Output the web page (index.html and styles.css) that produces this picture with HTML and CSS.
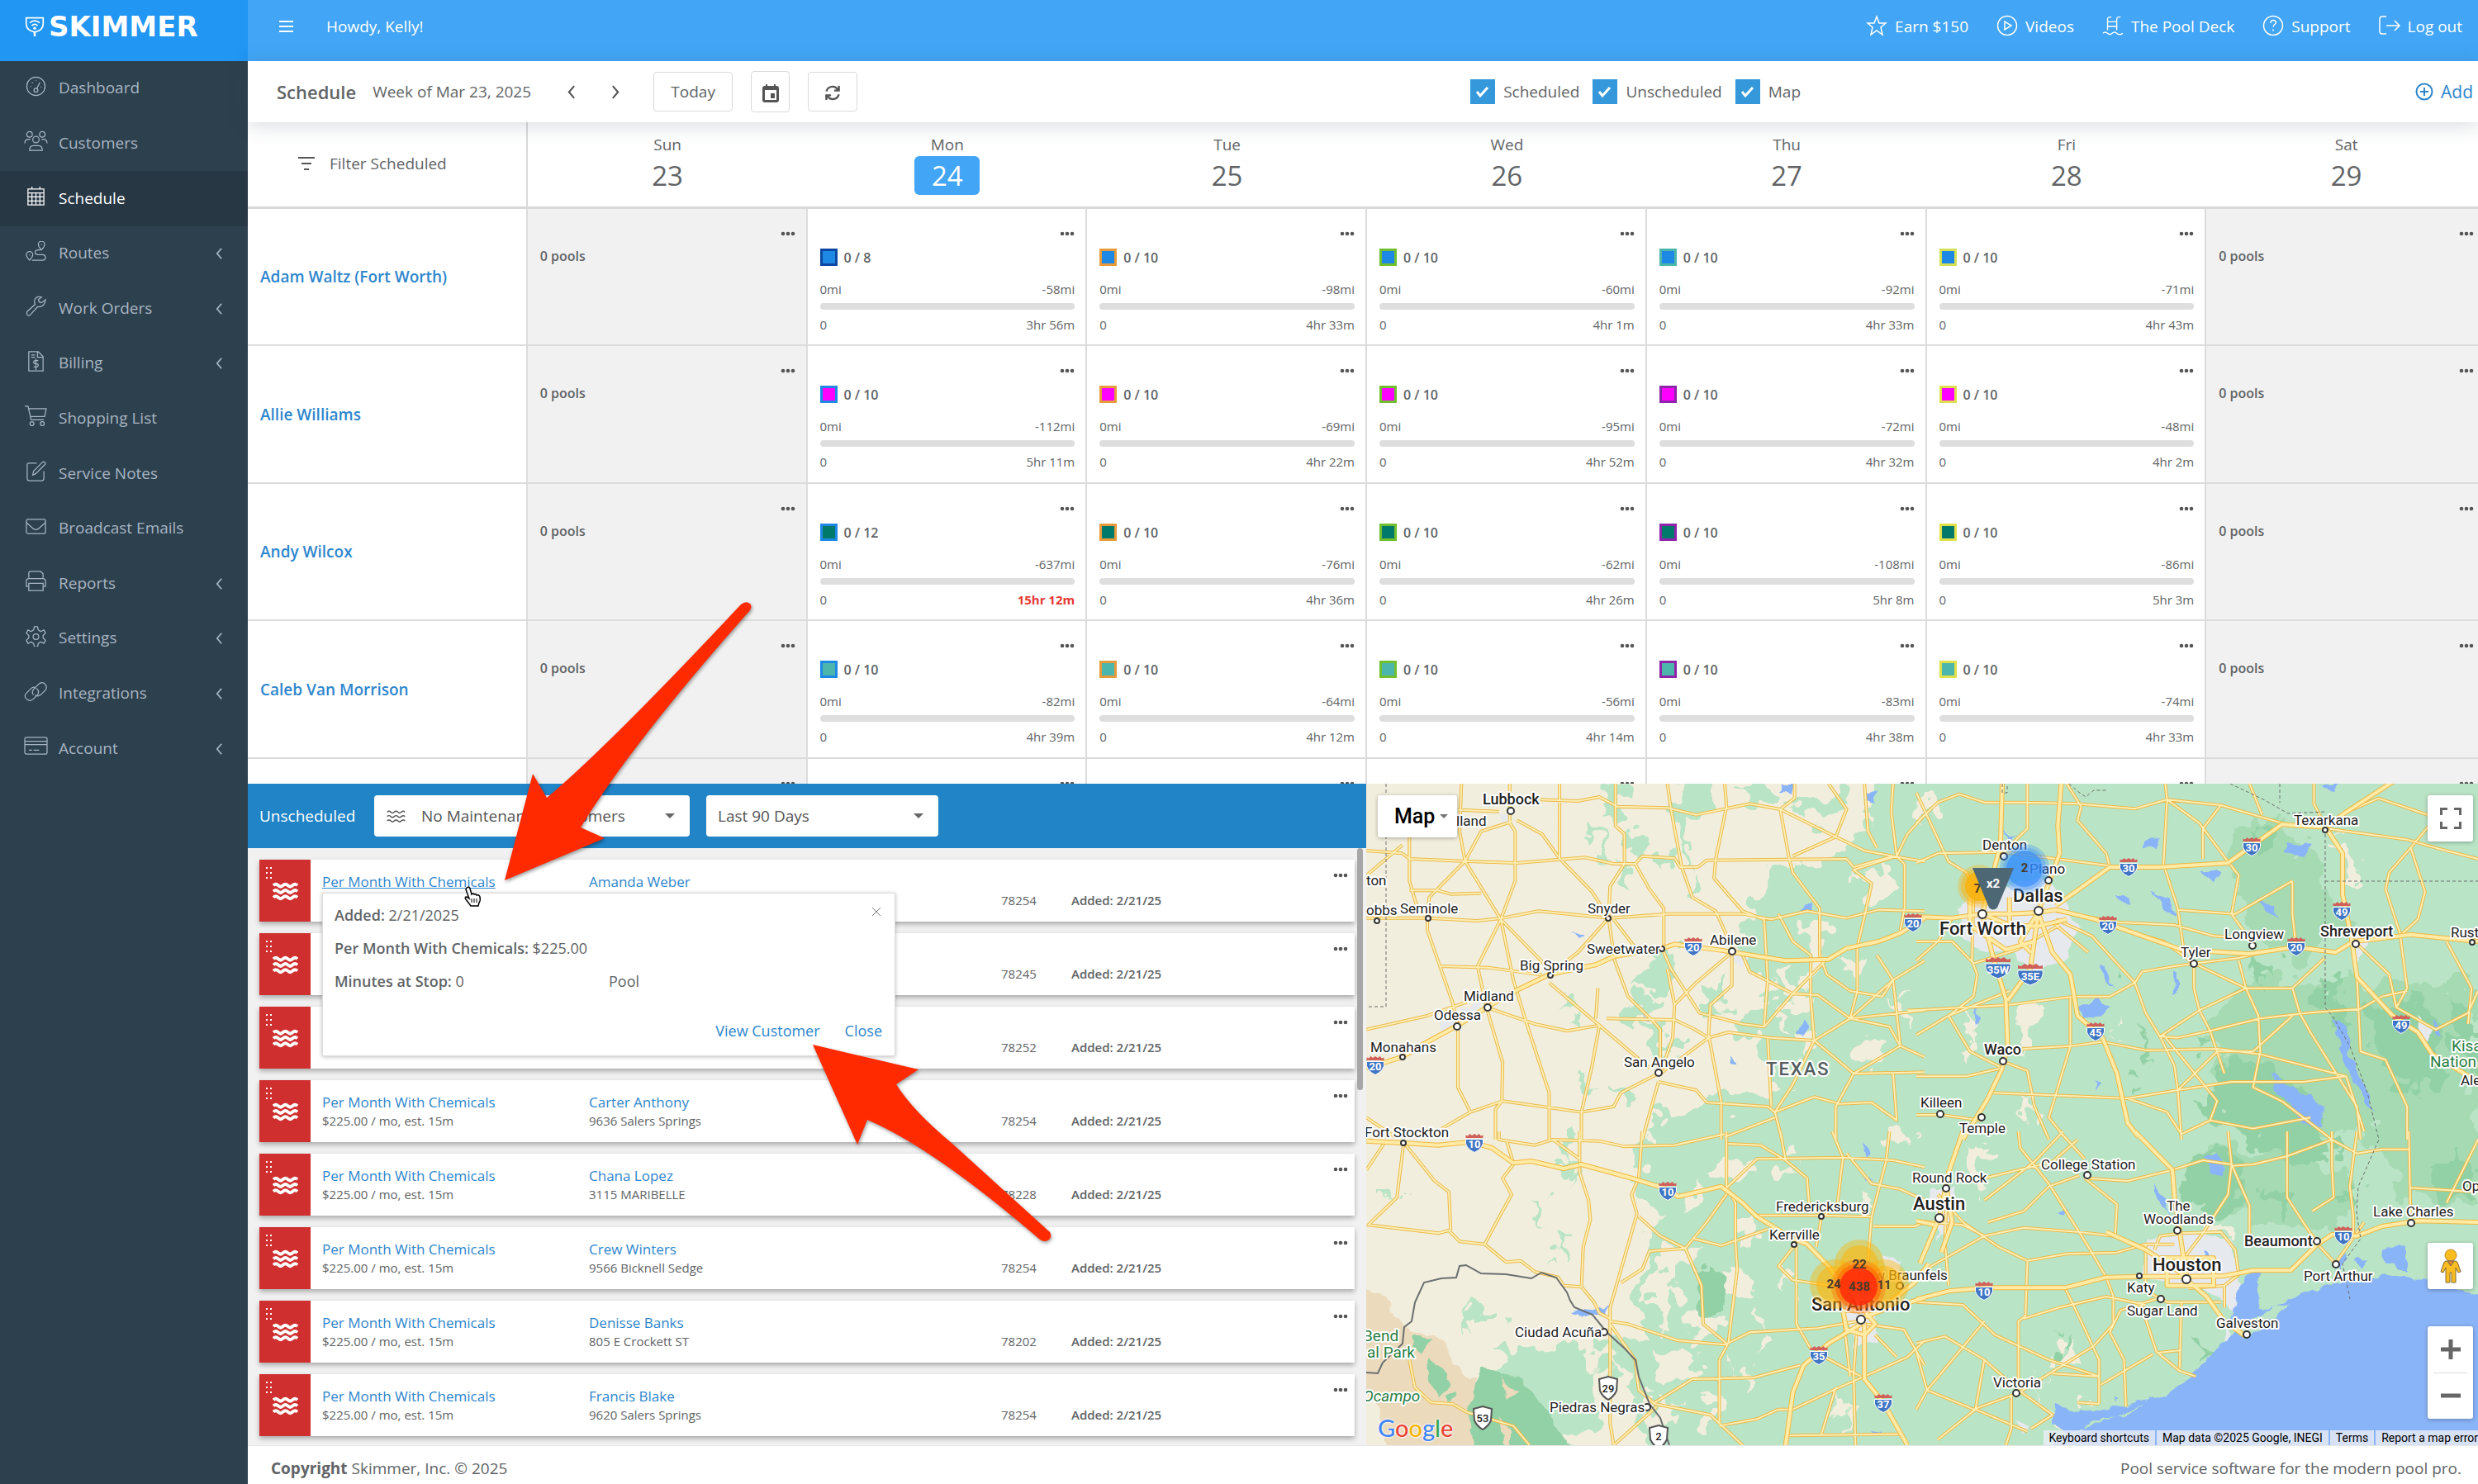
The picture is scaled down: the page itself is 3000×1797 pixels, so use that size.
FILE: index.html
```html
<!DOCTYPE html>
<html lang="en">
<head>
<meta charset="utf-8">
<title>Schedule - Skimmer</title>
<link rel="stylesheet" href="styles.css">
</head>
<body>
<svg class="sprite" aria-hidden="true">
  <symbol id="i-dots" viewBox="0 0 18 6"><circle cx="3" cy="3" r="2.3"/><circle cx="9" cy="3" r="2.3"/><circle cx="15" cy="3" r="2.3"/></symbol>
  <symbol id="i-waves" viewBox="0 0 32 22"><path d="M1 4.500q3-3 6 0t6 0q3-3 6 0t6 0q3-3 6 0M1 12q3-3 6 0t6 0q3-3 6 0t6 0q3-3 6 0M1 19.500q3-3 6 0t6 0q3-3 6 0t6 0q3-3 6 0" fill="none" stroke="currentColor"/></symbol>
  <symbol id="i-grip" viewBox="0 0 8 16"><path d="M0 0h2v2H0zM5 0h2v2H5zM0 6h2v2H0zM5 6h2v2H5zM0 12h2v2H0zM5 12h2v2H5z"/></symbol>
  <symbol id="i-left" viewBox="0 0 10 18"><path d="M8 2 2 9l6 7"/></symbol>
</svg>

<aside class="sidebar">
  <a class="brand" href="#">
    <svg class="brand-mark" viewBox="0 0 28 28"><g fill="none" stroke="#fff" stroke-width="2"><path d="M2 2h24v8q0 10-12 12Q2 20 2 10z"/><path d="M7 9q7-6 14 0M10 13q4-4 8 0"/></g><circle cx="14" cy="16.500" r="2" fill="#fff"/><path d="M12.500 21h3v7h-3z" fill="#fff"/></svg>
    <span>SKIMMER</span>
  </a>
  <nav class="menu">
    <a href="#"><svg viewBox="0 0 26 26"><circle cx="13" cy="13" r="11.500"/><circle cx="13" cy="18" r="2.500"/><path d="m14 16 4-8M6 13h1M8 8l1 1M13 5v1M19 14h1"/></svg>Dashboard</a>
    <a href="#"><svg viewBox="0 0 30 26"><circle cx="7" cy="5" r="3.500"/><circle cx="23" cy="5" r="3.500"/><circle cx="15" cy="11.500" r="4"/><path d="M1 16q0-5 5-5h2M29 16q0-5-5-5h-2M7 25q0-6 5-6h6q5 0 5 6z"/></svg>Customers</a>
    <a href="#" class="active"><svg viewBox="0 0 26 26"><path d="M3 4h20v20H3zM3 9h20M3 14h20M3 19h20M8 9v15M13 9v15M18 9v15M8 1v3M18 1v3"/></svg>Schedule</a>
    <a href="#"><svg viewBox="0 0 26 26"><path d="M20 11q-4-4-4-7a4 4 0 0 1 8 0q0 3-4 7zM5 24q-4-4-4-7a4 4 0 0 1 8 0q0 3-4 7zM19 11h-3q-4 0-4 3t4 3h5q4 0 4 3.500T21 24H8"/><path d="M20 4v1M5 17v1"/></svg>Routes<svg class="chev"><use href="#i-left"/></svg></a>
    <a href="#"><svg viewBox="0 0 26 26"><path d="M20 2q-8-2-9 5 0 2 1 4L2 20q-1 2 0 4 2 2 4 0l9-10q9 1 10-9l-5 4-3-1-1-3z"/></svg>Work Orders<svg class="chev"><use href="#i-left"/></svg></a>
    <a href="#"><svg viewBox="0 0 26 26"><path d="M4 1h12l6 6v18H4zM15 1v7h7M7 5h5M7 8h5M16 12q-6-1-6 2 0 2 3 2t3 2q0 3-6 2M13 10v14"/></svg>Billing<svg class="chev"><use href="#i-left"/></svg></a>
    <a href="#"><svg viewBox="0 0 30 26"><path d="M1 1h4l4 17h16M5 4h23l-2 10H8"/><circle cx="10" cy="23" r="2.500"/><circle cx="23" cy="23" r="2.500"/></svg>Shopping List</a>
    <a href="#"><svg viewBox="0 0 26 26"><path d="M14 3H4Q2 3 2 5v17q0 3 3 3h15q3 0 3-3V13M9 18l1-5L21 2q2-2 4 1 0 1-1 2L13 16z"/></svg>Service Notes</a>
    <a href="#"><svg viewBox="0 0 26 26"><rect x="1" y="4" width="24" height="18" rx="2"/><path d="m1 8 9 8q3 2 6 0l9-8"/></svg>Broadcast Emails</a>
    <a href="#"><svg viewBox="0 0 26 26"><path d="M4 9V3q0-2 2-2h13l3 3v5M4 20H1v-7q0-3 3-3h18q3 0 3 3v7h-3M4 16h18v9H4z"/></svg>Reports<svg class="chev"><use href="#i-left"/></svg></a>
    <a href="#"><svg viewBox="0 0 26 26"><path d="M11 1h4l1 4 3 2 4-2 2 4-3 3v3l3 3-2 4-4-2-3 2-1 4h-4l-1-4-3-2-4 2-2-4 3-3v-3L1 9l2-4 4 2 3-2z"/><circle cx="13" cy="13.500" r="3.500"/></svg>Settings<svg class="chev"><use href="#i-left"/></svg></a>
    <a href="#"><svg viewBox="0 0 32 26"><path d="M13 17q-3-3 0-7l6-6q4-4 8-1 4 4 1 8l-6 6q-4 3-7 0M17 9q4 4 1 8l-5 5q-4 4-8 1-5-4-1-8l6-6q3-3 6 0"/></svg>Integrations<svg class="chev"><use href="#i-left"/></svg></a>
    <a href="#"><svg viewBox="0 0 30 26"><rect x="1" y="2" width="28" height="21" rx="2"/><path d="M1 7h28M1 11h28M6 18h4M12 18h7"/></svg>Account<svg class="chev"><use href="#i-left"/></svg></a>
  </nav>
</aside>

<main class="page">
  <header class="topbar">
    <button class="burger" aria-label="Toggle menu"></button>
    <span class="greeting">Howdy, Kelly!</span>
    <nav class="toplinks">
      <a href="#"><svg viewBox="0 0 26 26"><path d="m13 2 3 8h8l-6 5 2 9-7-5-7 5 2-9-6-5h8z"/></svg>Earn $150</a>
      <a href="#"><svg viewBox="0 0 26 26"><circle cx="13" cy="13" r="11.500"/><path d="M10 8v10l8-5z"/></svg>Videos</a>
      <a href="#"><svg viewBox="0 0 28 26"><path d="M7 19V5q0-4 5-3M19 19V5q0-4 5-3M7 8h12M7 14h12M1 23q3-3 6 0t6 0q3-3 6 0t8 0"/></svg>The Pool Deck</a>
      <a href="#"><svg viewBox="0 0 26 26"><circle cx="13" cy="13" r="11.500"/><path d="M10 10q0-4 3.500-3.500 4 1 2.500 4-3 2-3 4M13 17.500v2"/></svg>Support</a>
      <a href="#"><svg viewBox="0 0 26 26"><path d="M9 2H4Q1 2 1 5v15q0 3 3 3h5M9 13h16M19 7l6 6-6 6"/></svg>Log out</a>
    </nav>
  </header>

  <section class="toolbar">
    <h1>Schedule</h1>
    <span class="week">Week of Mar 23, 2025</span>
    <button class="arrow" aria-label="Previous week"><svg><use href="#i-left"/></svg></button>
    <button class="arrow next" aria-label="Next week"><svg viewBox="0 0 10 18"><path d="m2 2 6 7-6 7"/></svg></button>
    <button class="box today">Today</button>
    <button class="box pick" aria-label="Pick a date"><svg viewBox="0 0 20 22"><path d="M3 2h1V0h2v2h8V0h2v2h1q3 0 3 3v14q0 3-3 3H3q-3 0-3-3V5q0-3 3-3zm0 5v12h14V7zm7 4h5v6h-5z" fill="#555" fill-rule="evenodd"/></svg></button>
    <button class="box refresh" aria-label="Refresh"><svg viewBox="0 0 20 20"><path d="M2 8q2-6 8-6 4 0 7 4M18 1v6h-6M18 12q-2 6-8 6-4 0-7-4M2 19v-6h6" fill="none" stroke="#555" stroke-width="2.500"/></svg></button>
    <div class="toggles">
      <label><input type="checkbox" checked>Scheduled</label>
      <label><input type="checkbox" checked>Unscheduled</label>
      <label><input type="checkbox" checked>Map</label>
    </div>
    <a class="add" href="#"><svg viewBox="0 0 22 22"><circle cx="11" cy="11" r="9.500"/><path d="M11 6v10M6 11h10"/></svg>Add</a>
  </section>

  <section class="schedule">
    <table>
      <thead><tr>
        <th class="filter"><button><svg viewBox="0 0 20 17"><path d="M0 0h20v2H0zM4 7h12v2H4zM7 14h6v2H7z"/></svg>Filter Scheduled</button></th>
        <th>Sun<b>23</b></th><th>Mon<b class="today-mark">24</b></th><th>Tue<b>25</b></th><th>Wed<b>26</b></th><th>Thu<b>27</b></th><th>Fri<b>28</b></th><th>Sat<b>29</b></th>
      </tr></thead>
      <tbody id="techs"></tbody>
    </table>
  </section>

  <section class="lower">
    <div class="unscheduled">
      <div class="filters">
        <span>Unscheduled</span>
        <div class="select wide"><svg class="wave"><use href="#i-waves"/></svg><select aria-label="Customer filter"><option>No Maintenance Customers</option></select></div>
        <div class="select"><select aria-label="Period"><option>Last 90 Days</option></select></div>
      </div>
      <div class="jobs" id="jobs"></div>
      <div class="thumb"></div>
      <div class="popup" role="dialog" aria-label="Service details">
        <button class="x" aria-label="Dismiss"><svg viewBox="0 0 12 12"><path d="m1 1 10 10M11 1 1 11"/></svg></button>
        <p><b>Added:</b> 2/21/2025</p>
        <p><b>Per Month With Chemicals:</b> $225.00</p>
        <p class="split"><span><b>Minutes at Stop:</b> 0</span><span>Pool</span></p>
        <div class="actions"><a href="#">View Customer</a><a href="#">Close</a></div>
      </div>
    </div>

    <div class="map">
      <svg class="tiles" viewBox="1654 949 1346 801" preserveAspectRatio="xMinYMin slice">
        <defs>
          <filter id="rough" x="-5%" y="-5%" width="110%" height="110%"><feTurbulence type="fractalNoise" baseFrequency="0.035" numOctaves="3" seed="4"/><feDisplacementMap in="SourceGraphic" scale="60" xChannelSelector="R" yChannelSelector="G"/></filter>
          <filter id="rough2" x="-5%" y="-5%" width="110%" height="110%"><feTurbulence type="fractalNoise" baseFrequency="0.06" numOctaves="2" seed="7"/><feDisplacementMap in="SourceGraphic" scale="14" xChannelSelector="R" yChannelSelector="G"/></filter>
          <g id="shield"><path d="M1.500 7.500h21q1 6-2 9.500-3.500 4.500-8.500 6.500-5-2-8.500-6.500-3-3.500-2-9.500z" fill="#3f75c4" stroke="#fff"/><path d="M1.500 6V2.500l2.500 1L6.500 1 9 3l3-2 3 2 2.500-2L20 3.500l2.500-1V6z" fill="#d0605a"/></g>
          <g id="shield-wide"><path d="M1 10h30q1 7-3 11-5 5-12 7-7-2-12-7-4-4-3-11z" fill="#3f75c4" stroke="#fff"/><path d="M1 8V4l4 1 4-3 4 2 3-2 3 2 4-2 4 3 4-1v4z" fill="#d0605a"/></g>
          <g id="mxshield"><path d="M2 5 13 2l11 3-1 14q-3 7-10 11Q6 26 3 19z" fill="#fff" stroke="#555" stroke-width="2"/></g>
          <g id="hwy">
            <g transform="translate(1650 940) scale(.4337 .3333)"><path d="M10 1060 110 1020 180 965 265 905 345 840 425 780 520 720 650 685 700 655 835 625 870 610 1000 632 1060 645 1180 670 1300 665 1350 625 1440 600 1500 570 1568 515"/></g>
            <g transform="translate(2320 940) scale(.4337 .3333)"><path d="M0 510 100 515 184 500 260 500 340 495 390 485 500 520 620 575 740 630 930 645 1060 620 1170 640 1220 600 1290 590 1380 575 1568 600M390 470 540 330 680 330 870 315 1020 175 1140 185 1200 130 1330 20M240 20 235 250 184 500 215 660 250 810 255 980 240 1060 200 1170 130 1320M405 20 395 180 400 280 340 495 325 640 318 700 255 815M340 495 380 640 430 720 450 870 520 950 560 1080 590 1260 620 1310M1145 190 1190 280V430L1215 590 1230 730 1330 870 1400 930 1440 1010 1568 1110M184 500 260 540 340 545 420 520M340 495 290 600 320 640M150 440V540L250 630 330 600M260 440V560"/></g>
            <g transform="translate(1650 1370) scale(.4337 .3333)"><path d="M10 35 110 42 210 50 300 38 360 60 420 115 470 108 560 135 610 120 750 170 850 210 880 237 1000 200 1060 260 1100 310 1200 390 1240 410 1300 490 1390 660M1390 700 1300 770 1230 850 1200 950 1180 1140M1400 700V900L1450 980 1520 1140M1390 680 1450 650 1568 605M1580 480 1540 550 1430 660M1340 650 1350 720 1400 740 1430 700 1400 650z"/></g>
            <g transform="translate(2320 1370) scale(.4337 .3333)"><path d="M0 610 90 580 200 568 415 568 530 530 640 527 755 527 860 525 940 505 1045 505 1120 410 1160 375 1230 380 1300 345 1400 325 1568 330M610 0 715 140 720 230 745 450 755 530M755 540 810 600 860 690 920 745M130 0 90 150 65 310 10 480M0 325 50 340M680 460H830V560H700V460M85 210 100 330 70 440M530 365 640 430 700 480 755 530"/></g>
          </g>
          <g id="roads">
            <g transform="translate(1650 940) scale(.4337 .3333)"><path d="M10 270 110 280 130 300 280 308 430 315 620 295 700 318 760 318 780 290 870 298 885 330H935L960 305 1350 300 1370 330 1480 290 1568 310M10 515 180 515 320 525 390 515 490 490 690 515 850 500 1060 500 1140 520 1240 490 1350 515 1440 485 1568 490M130 220V380L150 470M275 27 270 200 285 308M410 27V170L425 200V380L385 520M415 165 330 200 285 308 385 520 420 740 455 890 520 1150M430 160 500 210 550 300 640 420 686 515M549 27V300M130 415H210L245 428 330 425M705 27V180L730 210V318L690 400 686 515 600 640 520 720M760 318 800 410 840 480V620M850 27 860 120 890 330 920 440 985 490 1030 620M1010 27 1015 110 985 300 980 370 1060 490 1120 520M265 122 380 128M495 85 600 90 660 75 710 110 850 115 930 140 1080 100 1165 120 1320 220 1400 270 1480 290M1205 27V80L1165 120 1190 300 1200 350 1275 480V650L1295 720 1360 780 1450 800M1300 27 1350 120 1320 220 1200 290M1160 500 1200 600 1250 650V800L1260 960M1400 27 1410 200 1435 260M1480 27 1475 130 1490 290 1512 320V480L1500 560M1568 140 1520 210 1490 290 1370 340 1420 390 1400 510 1380 620V780L1360 880M180 515V560L250 820 265 905V1130L300 1220M285 308 185 440 180 515M385 520 320 690 345 840 390 1040 388 1180 370 1210V1320M385 520 520 700M215 690 350 695 500 722M10 920 180 870 290 820M345 840 480 900 570 925 660 905 520 750M650 880 656 770M686 515 695 600 700 660 740 800 810 890 830 920V1080M700 520 770 640M835 625 860 700 910 800 940 860 1060 900 1120 910M850 700 870 830 865 950 830 1080M1030 640 930 750 870 830M1030 640V760L970 830 965 940 1000 1180V1320M1060 650 1080 710 1200 790 1270 795 1360 880 1470 910 1500 980 1568 1020M660 905 640 1050 610 1220V1320M660 905 800 1060M680 880 870 885 920 915 965 950 1020 930 1140 950 1260 960 1370 1080 1320 1200V1320M965 950 830 1080M520 1150V1320M825 1080 720 1150 700 1200 610 1220 390 1180 300 1220 220 1280M825 1110 930 1140 960 1185 1130 1200 1150 1220 1170 1320M825 1110 780 1320M1130 950 1140 1200M1260 960 1200 1120 1150 1220 1260 1165 1330 1190 1420 1185 1490 1250 1480 1080M1370 1080 1568 1075M1480 740 1450 800M1480 740 1500 980 1370 1080M1120 520 1130 740 1120 910 1200 790M1295 665 1200 790M1010 1310 1150 1240M1435 650 1480 740 1568 670M1480 740 1360 880 1260 960M10 1240 90 1310M1520 850H1568L1360 880M110 250 10 360"/></g>
            <g transform="translate(2320 940) scale(.4337 .3333)"><path d="M0 170 60 95 120 65 190 95 310 95 450 100 610 118 700 85 850 105 1020 170M0 60 90 310 140 350 170 430M0 315 60 280 240 275 360 295 540 325M310 27V190L240 280M420 27 460 110 450 160 530 280 540 330M695 27 700 85 690 320 730 480 745 620M700 85 790 170 870 310M930 27 965 140M850 105 800 190V300M390 490 560 530 720 540 830 580 935 590M730 485 890 500 1050 380M870 310 900 360 880 500 940 610M1110 27V100L1145 190 1370 230 1450 260 1568 300M1200 130 1290 80 1450 150 1380 260 1320 350 1310 410 1350 570M1380 260 1420 420 1400 520 1350 580M775 680 690 600 610 570M775 680 720 690 630 710 610 750 540 800 440 800 260 830 0 850M775 680V770L790 850 820 925 860 1080M775 680 900 660 1000 630M775 680 920 770 1050 770 1140 660M390 520 490 580 560 680 610 750 640 860 680 945 720 1050 730 1140 740 1320M900 670 920 770 955 870 960 1000 940 1130 1020 1180 1160 1320M1050 770 1070 860 1100 930 1230 1200 1240 1320M920 770 790 850 680 945 730 950 820 925 960 880 1090 860 1240 845 1300 800M1230 730 1240 1000 1310 1030 1370 1200V1320M1050 870 940 1000 840 1000 730 1140M690 940 840 1180 820 1250 740 1300M0 940 90 870 260 780M90 870 150 1000 240 1060M240 1010 300 990 430 980 520 965 640 995 840 990 960 1010 1200 1090M215 1150 410 1160 590 1170 730 1140 880 1110 1080 1110 1200 1090 1250 1290M0 1090 140 1090 240 1060M250 1040 310 1070 330 1200 370 1320M430 800V980L370 1240 420 1320M160 430 155 670 170 720 160 800 90 870M0 600 100 600 160 680 280 630 400 540M100 515 60 600 0 670M380 530 480 640M820 1250 940 1280 1100 1240M0 1230 70 1230 180 1250M1350 570 1370 770 1340 840 1450 920 1540 860 1568 780M1480 600 1550 770 1540 900M1215 590 1320 720 1340 840M1050 380V500L1060 620M590 1170 700 1220 740 1300M1370 780 1300 800 1240 845"/></g>
            <g transform="translate(1650 1370) scale(.4337 .3333)"><path d="M60 42 10 140M113 50 95 240 15 340 210 370 240 360 270 400 340 410 400 475 440 470 480 510 545 530 560 560 610 565 645 620 660 660 690 680M120 50 200 180 240 220 245 360M420 120 390 170 415 230 385 300 340 410M380 0V30L480 50 530 30 660 35 730 55 870 50 1010 10M400 30 420 115M530 30 605 100M605 0V150L630 250 635 320 615 420 610 565M780 0 770 170 750 230 765 300 690 640V1060L700 1140M770 310 830 380 900 425 945 560 950 700 1015 770M1025 210 960 330 900 425 800 435 780 500 720 550M1015 0V200L1040 260V400L1045 500 1020 770 995 830V1060M925 390 1000 415 1130 355M1015 205 1100 100 1340 95 1480 105 1568 130M1020 45 1110 50 1180 105 1240 170 1245 260 1280 310 1265 420M1100 305H1280L1420 310M1165 0 1180 105M1310 0 1340 95 1325 260 1285 310M1350 80 1420 190 1500 210 1568 250M1425 345H1540L1568 330M1470 0 1460 110 1420 310 1410 470M1205 415 1160 490 1200 540 1330 565M1210 415V700L1250 790M690 690 740 700 880 760 1010 775 1080 730 1270 715 1380 690M815 985 920 900 1090 895 1220 850M690 700 760 830 770 940 815 990 970 1030 1060 1140M820 1000 700 1140M995 1070 1100 1045 1160 1010 1200 1010M1200 1010 1330 930 1400 890 1520 820 1568 760M1260 800 1390 890M1320 930 1280 1100M1190 1105 1500 1100M1380 700 1370 880 1375 1140M1400 700 1510 720 1568 850M1430 740 1490 820M1340 660 1360 890M130 830 145 930 190 985 250 990 290 1020 420 1070 465 1140"/></g>
            <g transform="translate(2320 1370) scale(.4337 .3333)"><path d="M470 170 560 265 555 380M455 160 370 200 300 290 200 330M190 170 380 110 450 30M0 325 130 340 190 380 300 350 450 365 550 380M85 210 80 400 90 560M285 0 290 60 370 190 490 440 530 530M310 470 305 670 285 690V940M310 470 230 420 130 330M310 470 420 445 560 440 640 410H720M190 380 0 520M415 568 460 690 510 830V990M530 530 550 600V700L495 780 285 950M690 600 570 650 540 730 580 830 585 1000M625 620 670 800 735 870 780 890M670 805 740 795M740 620 735 860M0 620 130 630 220 740 370 830 510 890M0 770 80 745 190 830 285 940 380 1030 320 1080M190 830 165 1010 60 1120M285 950 160 1010 30 940 0 1010M30 940 0 800M30 940 190 690M300 680 400 640 530 600 640 630M380 880 510 890M450 985 510 990M515 920 660 810M265 960V1080L250 1140M165 1010 310 1090M470 170 590 180 715 140 800 105 880 120 930 270V380M870 0 880 120 870 230 800 370 750 455M880 125 940 120 1035 90 1160 30 1230 80 1300 65H1375M1035 0V240L1100 370 1120 400M1230 0 1210 200 1220 310V380M1375 0 1380 330M1160 0V120L1165 240 1105 290M1568 30 1480 260M1380 205 1560 220M1120 410 1170 480 1250 330M640 410V580L700 620H850M665 430 680 380 740 370 850 365 890 430 900 520 860 560 760 570M860 560V640M410 0 330 110 190 250M130 330 60 230M400 0 470 100"/></g>
          </g>
        </defs>
        <rect x="1654" y="949" width="1346" height="801" fill="#f2eedd"/>
        <g filter="url(#rough)">
          <path fill="#bae4c6" d="M3060 900H2280L2255 1000 2235 1035 2150 1045 2118 1090 2108 1150 2145 1200 2100 1240 2140 1290 2165 1330 2080 1330 2010 1360 1990 1400 1975 1440 2010 1480 1975 1560 1990 1620 1930 1620 1990 1700 1990 1800H3060z"/>
          <path fill="#bae4c6" d="M1940 950h20l5 25-20 10zM2035 950h40v25l-15 20-20-10zM2110 950h50l-10 25-25 5zM1925 995l15 15 8 40-15-20zM1975 1005l15 10-5 25-14-10zM2015 1020l15 5-5 20-15-5zM2035 1060l15 0-5 15h-12zM1950 1050l25 5 10 18-25-10zM2005 1160l20-10 5 15-30 35-25-10zM1960 1220l30-20 15 15-30 35zM1990 1240l40 20 0 20-15 15zM1905 1310l20-10 5 20zM1950 1320l30 0-10 20zM1895 1215l15 5 5 15-15-5zM2000 1340l30 30-20 30-15-30zM1890 1370l20 5-10 50-10-20zM1860 1450l10 10-5 35zM1885 1490l12 5-8 40zM1765 1590l35-5 0 15-30 5zM2060 1200l25-10 5 35-20 10zM1815 1590l20 5-15 15zM2030 975l20-10-5 90zM1800 1640l100-15 50 30-20 70-60 10zM1680 1440h8l-4 10zM2165 965l60-5 20 20-60 25z"/>
        </g>
        <g filter="url(#rough)" fill="#f2eedd">
          <path d="M2250 1060l30-10 20 20-15 20-25-5zM2180 1110l25 5 5 70-20 10zM2230 1150l40 10-30 20zM2160 1170l20 30-15 50-10-30zM2260 1250l30 10-15 30-20-5zM2290 1200l25 0-10 40zM2180 1250l25 15-30 30zM2330 960h20l-15 40zM2370 1260l20 10-5 20zM2385 1220l10 25-12 40zM2445 1220l20 5-10 40-20-10zM2455 1320l18 40-12 5zM2090 1400l30 5-20 25-20-10zM2050 1430l20 20-35 25zM2100 1470l30 0-15 40zM2030 1500l30 10-50 50-10-20zM2150 1410l30-10-20 25zM2090 1540l40 10-10 25-40-10zM2000 1540l30 20-10 40-20-20zM2060 1580l30 20-40 30-10-20zM2120 1600l25 10-15 30zM2010 1640l50 10-40 20zM2150 1530l25 10-5 30zM2000 1680l30 20-10 40-20-10zM2060 1690l25 10-10 40zM2100 1650l20 10 0 30zM2220 1690l20 15-10 25zM2250 1440l20 10-15 10zM2375 1390l25-10 5 50-15 20zM2480 1630l14 8-5 20-12-5zM2500 1620l15 20-15 12zM2460 1650l15 40 30 40-15 10zM2520 1690l10 0-5 20zM2560 1230l8 20-10 10zM2290 1360l20 20-30 10zM2830 1010l20 20 8 40-15 10zM2670 1480l20 0-5 20z"/>
        </g>
        <g filter="url(#rough)" fill="#a6dab3">
          <path d="M2700 1190h300v270l-80-10-60-90-90 30-70-60-30-70zM2640 1400l150-10 60 40-20 60-100-10-60-30zM2690 1010l50-20 60 40 40 90-50 50-60-30z"/>
        </g>
        <g filter="url(#rough)" fill="#92d1a5">
          <path d="M2690 1280l60 10 60 50 20 60-60 10-60-40-40-30zM2860 1220l60-20 40 50-20 80-50-30zM2640 1400l70 0 10 60-60 10zM2720 1010l20-10 15 30-20 10zM2800 1180l30 10 5 50-25-20zM2730 1160l20 10-10 30zM2960 1200l40 40v60l-30-30zM2050 1540l35 0 5 40-25 10zM2590 1310l8 10-10 12zM2595 1250l12 20-8 20zM2660 1250l15 10-10 15zM2560 1170l8 10-5 8zM2490 1610l10 25-8 5zM2660 1620l10 20-10 15zM2740 1440l30 10-10 30zM2940 1420l40-20 20 40-40 10zM2830 1440l15 10-10 15z"/>
        </g>
        <g fill="#ecdabd" filter="url(#rough2)"><path d="M1640 1560l38 8 8 24 20 18 40 12 15 30 25 20 5 90H1680l-10-60-30-20z"/></g>
        <g fill="#92d1a5" filter="url(#rough2)"><path d="M1793 1657l50 12 30 40 40 60h-125l-12-60zM1712 1615l20 10-8 15-14-8zM1728 1645l20 12 10 20-15 15-14-25zM1750 1690l12-5-10 18z"/><path fill="#ecdabd" d="M1818 1665l18 22-12 8zM1815 1715l14 20 0 20-10-10z"/></g>
        <g fill="#e6e9ee" filter="url(#rough2)">
          <path d="M2370 1100l40-20 60-20 30 30 15 30-10 40-40 20-30-30-30 5-30-20zM2235 1590h35l5 35-30 5zM2600 1500l60-10 40 10 10 50 20 40-10 25-20-30-25-20-50-10-30-10zM2336 1440l30 0 0 40-20 20zM1740 1238l30-5v15h-25zM1760 1225l30-10-5 12zM2095 1155h20l-5 20zM1815 985h15v10h-12zM2280 1520l20 5 0 30-15-10zM2500 1415h20l10 10zM2845 1130l20 10-10 25zM2925 1230l20 15-10 20zM2690 1595l15 30-10 10zM2440 1720l15 5-5 10z"/>
        </g>
        <g fill="#8ab4f8" filter="url(#rough2)">
          <path d="M3040 1580l-60-18-50-14-40-4-45 6-45 12-40 18-35 18-35 30-40 42-35 20-60 28-50 18-40 34h560zM2713 1555l20-20 2 50 38-5-30 22-20 20-25-20zM2490 1702l30 8 80-14-25 16-45 10-20 18-25-15z"/>
          <path d="M2750 1300l20 15 25 10 20 15-5 25-25-5-15-25-15-15zM2824 1230l16 14 4 30 14 30 14 40-14-12-18-40-8-34zM2670 1400l15-5 10 20-5 10-15-5zM2610 1430l10 20 4 20-12-15zM2518 1220l20-10 18 12-15 8-20 5zM2540 1165l8 5 10 25-8-8zM2630 1175h6v30h-5zM2605 1080l20 10 10 18-15-8zM2563 1085l15 2 3 12-12-2zM2595 1018l20-3-5 12-15-2zM2765 1020l35 5-10 12-25-5zM2665 1055l25 0-10 12zM2733 1085l20 15 8 12-18-10zM2810 950h20l-5 12zM2425 1000l8 12 10 0-12 10zM2155 950h15l-3 12-14-5zM2260 960l12-5-5 20-8-5zM2185 1095l10 0-4 12-10-3zM2182 1235l7 8-5 12-8-5zM1990 1225l5 8 0 8zM2095 1282l8 6-10 4zM1903 1125l15 8-5 3zM1900 1592l50-12-5 12-42 2zM2255 1380l10 15-6 10zM2260 1427l8 3-10 2zM2830 1525l10-10 4 8-12 15zM2884 1515l30-10v34l-24-12zM2850 1525l18-2-8 12zM2490 1467l14-2-8 7zM2668 1515l10 5-5 10zM2945 1235l10 8 0 15-8-8zM2390 1215l8 18-4 8zM2535 1305l6 8-2 8zM2560 1690l5 5-4 5zM2265 1733l15 2-8 5z"/>
        </g>
        <use href="#roads" class="road-edge"/><use href="#roads" class="road"/>
        <use href="#hwy" class="hwy-edge"/><use href="#hwy" class="hwy"/>
        <g class="borders">
          <path class="national" d="M1654 1662 1668 1663 1674 1650 1698 1627 1700 1607 1709 1600 1713 1577 1724 1553 1745 1548 1763 1547 1767 1533 1775 1532 1793 1542 1823 1543 1854 1548 1866 1541 1884 1547 1897 1565 1901 1575 1906 1583 1928 1592 1945 1613 1967 1633 1980 1647 1984 1667 1997 1700 2010 1717 2021 1750"/>
          <path d="M1678 949V1219H1654M2815 1003V1220L2825 1232 2845 1267 2866 1323 2880 1380 2855 1437 2853 1470 2858 1500 2836 1530 2845 1573M2815 1067H3000M2700 949 2740 968 2770 985 2815 983M2760 949V972M2424 949V960H2430V949M2505 949 2515 958 2525 965 2535 957H2550"/>
        </g>
        <g class="dots">
          <circle cx="1829" cy="982" r="4"/><circle cx="1729" cy="1112" r="3"/><circle cx="1667" cy="1115" r="3"/><circle cx="1947" cy="1112" r="3"/><circle cx="2012" cy="1149" r="3"/><circle cx="2097" cy="1152" r="4"/><circle cx="1877" cy="1181" r="3"/><circle cx="1801" cy="1220" r="4"/><circle cx="1764" cy="1243" r="4"/><circle cx="1698" cy="1280" r="3"/><circle cx="2008" cy="1299" r="4"/><circle cx="1699" cy="1384" r="3"/><circle cx="2426" cy="1037" r="4"/><circle cx="2480" cy="1066" r="4"/><circle cx="2468" cy="1103" r="5"/><circle cx="2400" cy="1107" r="5"/><circle cx="2727" cy="1145" r="4"/><circle cx="2656" cy="1167" r="4"/><circle cx="2815" cy="1005" r="3"/><circle cx="2852" cy="1143" r="4"/><circle cx="2993" cy="1141" r="3"/><circle cx="2425" cy="1285" r="4"/><circle cx="2349" cy="1349" r="4"/><circle cx="2399" cy="1353" r="4"/><circle cx="2205" cy="1473" r="3"/><circle cx="2172" cy="1507" r="3"/><circle cx="1942" cy="1613" r="4"/><circle cx="1994" cy="1704" r="4"/><circle cx="2253" cy="1598" r="5"/><circle cx="2300" cy="1557" r="4"/><circle cx="2356" cy="1439" r="4"/><circle cx="2348" cy="1475" r="5"/><circle cx="2527" cy="1423" r="4"/><circle cx="2636" cy="1490" r="4"/><circle cx="2647" cy="1549" r="5"/><circle cx="2590" cy="1545" r="3"/><circle cx="2616" cy="1573" r="4"/><circle cx="2720" cy="1616" r="4"/><circle cx="2805" cy="1503" r="4"/><circle cx="2828" cy="1531" r="4"/><circle cx="2919" cy="1481" r="4"/><circle cx="2441" cy="1687" r="4"/>
        </g>
        <g class="signs">
          <use href="#shield" x="2038" y="1134"/><text x="2050" y="1152">20</text>
          <use href="#shield" x="1653" y="1278"/><text x="1665" y="1296">20</text>
          <use href="#shield" x="2304" y="1105"/><text x="2316" y="1123">20</text>
          <use href="#shield" x="1773" y="1372"/><text x="1785" y="1390">10</text>
          <use href="#shield" x="2007" y="1430"/><text x="2019" y="1448">10</text>
          <use href="#shield" x="2565" y="1038"/><text x="2577" y="1056">30</text>
          <use href="#shield" x="2714" y="1013"/><text x="2726" y="1031">30</text>
          <use href="#shield" x="2823" y="1091"/><text x="2835" y="1109">49</text>
          <use href="#shield" x="2540" y="1108"/><text x="2552" y="1126">20</text>
          <use href="#shield" x="2768" y="1134"/><text x="2780" y="1152">20</text>
          <use href="#shield-wide" x="2403" y="1157"/><text x="2419" y="1179">35W</text>
          <use href="#shield-wide" x="2442" y="1165"/><text x="2458" y="1187">35E</text>
          <use href="#shield" x="2525" y="1237"/><text x="2537" y="1255">45</text>
          <use href="#shield" x="2895" y="1228"/><text x="2907" y="1246">49</text>
          <use href="#shield" x="2190" y="1629"/><text x="2202" y="1647">35</text>
          <use href="#shield" x="2268" y="1687"/><text x="2280" y="1705">37</text>
          <use href="#shield" x="2390" y="1551"/><text x="2402" y="1569">10</text>
          <use href="#shield" x="2825" y="1484"/><text x="2837" y="1502">10</text>
          <use href="#mxshield" x="1934" y="1665"/><text class="dark" x="1947" y="1686">29</text>
          <use href="#mxshield" x="1782" y="1701"/><text class="dark" x="1795" y="1722">53</text>
          <use href="#mxshield" x="1995" y="1724"/><text class="dark" x="2008" y="1744">2</text>
        </g>
        <g class="labels">
          <text x="1763" y="1000">lland</text><text x="1695" y="1106">Seminole</text><text x="1922" y="1106">Snyder</text><text x="1654" y="1072">ton</text><text x="1654" y="1108">obbs</text><text x="1921" y="1155">Sweetwater</text><text x="2070" y="1144">Abilene</text><text x="1840" y="1175">Big Spring</text><text x="1772" y="1212">Midland</text><text x="1736" y="1235">Odessa</text><text x="1659" y="1274">Monahans</text><text x="1966" y="1292">San Angelo</text><text x="1652" y="1377">Fort Stockton</text>
          <text x="2400" y="1029">Denton</text><text x="2457" y="1058">Plano</text><text x="2693" y="1137">Longview</text><text x="2640" y="1159">Tyler</text><text x="2777" y="999">Texarkana</text><text x="2967" y="1135">Rust</text><text x="2325" y="1341">Killeen</text><text x="2372" y="1372">Temple</text><text x="2979" y="1314">Ale</text>
          <text x="2150" y="1467">Fredericksburg</text><text x="2142" y="1501">Kerrville</text><text x="1834" y="1619">Ciudad Acuña</text><text x="1876" y="1710">Piedras Negras</text><text x="2248" y="1550">New Braunfels</text>
          <text x="2315" y="1432">Round Rock</text><text x="2471" y="1416">College Station</text><text x="2623" y="1466">The</text><text x="2595" y="1482">Woodlands</text><text x="2575" y="1565">Katy</text><text x="2575" y="1593">Sugar Land</text><text x="2683" y="1608">Galveston</text><text x="2789" y="1551">Port Arthur</text><text x="2873" y="1473">Lake Charles</text><text x="2981" y="1442">Op</text><text x="2413" y="1680">Victoria</text>
          <g class="mid"><text x="1795" y="974">Lubbock</text><text x="2809" y="1134">Shreveport</text><text x="2402" y="1277">Waco</text><text x="2717" y="1509">Beaumont</text></g>
          <g class="large"><text x="2437" y="1092">Dallas</text><text x="2348" y="1132">Fort Worth</text><text x="2193" y="1587">San Antonio</text><text x="2316" y="1465">Austin</text><text x="2606" y="1539">Houston</text></g>
          <g class="park"><text x="2968" y="1273">Kisa</text><text x="2942" y="1292">Nation</text><text x="1650" y="1624">Bend</text><text x="1655" y="1644">al Park</text><text class="it" x="1650" y="1697">Ocampo</text></g>
          <text class="state" x="2138" y="1302">TEXAS</text>
        </g>
        <g class="clusters">
          <g fill="#2f8bff"><circle cx="2451" cy="1052" r="30" opacity=".3"/><circle cx="2451" cy="1052" r="26" opacity=".3"/><circle cx="2451" cy="1052" r="22" opacity=".6"/></g>
          <g fill="#ffae00"><circle cx="2396" cy="1073" r="26" opacity=".3"/><circle cx="2396" cy="1073" r="22" opacity=".4"/><circle cx="2397" cy="1073" r="18" opacity=".7"/></g>
          <text x="2394" y="1081">7</text>
          <path d="M2388 1051h50l-20 48q-5 5-10 0z" fill="#4e6775"/>
          <g fill="#ffb300"><circle cx="2251" cy="1531" r="30" opacity=".4"/><circle cx="2221" cy="1555" r="30" opacity=".4"/><circle cx="2281" cy="1555" r="30" opacity=".4"/><circle cx="2251" cy="1531" r="23" opacity=".5"/><circle cx="2221" cy="1555" r="22" opacity=".5"/><circle cx="2281" cy="1555" r="22" opacity=".5"/></g>
          <circle cx="2250" cy="1558" r="33" fill="#ff5a00" opacity=".3"/><circle cx="2250" cy="1558" r="28" fill="#ff5a00" opacity=".5"/><circle cx="2250" cy="1558" r="23" fill="#ff2a0a" opacity=".85"/>
          <text x="2251" y="1536">22</text><text x="2220" y="1560">24</text><text x="2251" y="1563">438</text><text x="2281" y="1561">11</text><text x="2451" y="1056">2</text><text x="2413" y="1075" class="w">x2</text>
        </g>
      </svg>
      <button class="maptype">Map</button>
      <button class="ctl full" aria-label="Toggle fullscreen"><svg viewBox="0 0 26 26"><path d="M1.500 9V1.500H9M17 1.500h7.500V9M24.500 17v7.500H17M9 24.500H1.500V17"/></svg></button>
      <button class="ctl peg" aria-label="Street View"><svg viewBox="0 0 28 42"><path d="M8 15h12q2 0 3 4l3 9-3 1-3-6v18h-5V29h-2v12H8V23l-3 6-3-1 3-9q1-4 3-4z" fill="#fbbc1f" stroke="#7f6b38"/><circle cx="14" cy="8" r="7" fill="#fbbc1f" stroke="#b8892a"/><path d="M10 15h8l-4 6z" fill="#e8871e"/></svg></button>
      <div class="zoom"><button aria-label="Zoom in"><svg viewBox="0 0 26 26"><path d="M13 1v24M1 13h24"/></svg></button><button aria-label="Zoom out"><svg viewBox="0 0 26 26"><path d="M1 13h24"/></svg></button></div>
      <div class="google" aria-label="Google"><i>G</i><i>o</i><i>o</i><i>g</i><i>l</i><i>e</i></div>
      <div class="credits"><a href="#">Keyboard shortcuts</a><span>Map data ©2025 Google, INEGI</span><a href="#">Terms</a><a href="#">Report a map error</a></div>
    </div>
  </section>

  <footer><span><b>Copyright</b> Skimmer, Inc. © 2025</span><span>Pool service software for the modern pool pro.</span></footer>
</main>

<svg class="callout first" viewBox="605 725 310 350"><path d="M611 1066 645 937 662 966Q735 905 897 732 903 727 908 731 911 734 908 739 765 900 703 1002L732 1015z"/></svg>
<svg class="callout second" viewBox="980 1260 300 250"><path d="M984 1265 1112 1295 1085 1313Q1105 1345 1152 1384L1271 1492Q1274 1498 1270 1501 1265 1505 1259 1501 1130 1390 1050 1356L1038 1386z"/></svg>
<svg class="hand" viewBox="0 0 24 26"><path d="M5 2q3-2 4 1l2 7q2-2 3 0 2-1 3 1 3-1 4 2 1 5-1 7l-1 4h-9l-6-8q-2-3 1-3l3 2L4 4z" fill="#fff" stroke="#000" stroke-width="1.500"/><path d="M11 15v5M14 15v5M17 15v5" stroke="#000"/></svg>
<script src="script.js"></script>
</body>
</html>
```
FILE: styles.css
```css
* { box-sizing: border-box; }
body {
  margin: 0;
  display: flex;
  height: 100vh;
  overflow: hidden;
  position: relative;
  background: #fff;
  color: #616466;
  font: 19px/26px "Open Sans", "Noto Sans", sans-serif;
}
a { color: #2e86cd; text-decoration: none; }
button { font: inherit; color: inherit; border: 0; background: none; padding: 0; margin: 0; }
b, h1 { font-weight: 600; }
.sprite { position: absolute; width: 0; height: 0; }

/* sidebar */
.sidebar { flex: none; width: 300px; background: #2d404e; }
.brand {
  display: flex; align-items: center; gap: 3px; height: 74px; padding: 0 0 10px 28px;
  background: #2196f3; color: #fff; font: bold 34px/32px "DejaVu Sans", sans-serif;
}
.brand-mark { width: 28px; height: 24px; }
.menu { display: grid; grid-auto-rows: 1fr; height: 866px; }
.menu a { display: flex; align-items: center; gap: 12px; padding: 0 0 2px 28px; color: #a7b5c2; }
.menu a.active { background: #283744; color: #fff; }
.menu svg { width: 31px; height: 25px; margin-bottom: 4px; fill: none; stroke: currentColor; stroke-width: 1.300; }
.menu .chev { width: 9px; height: 16px; margin: 2px 30px 0 auto; stroke-width: 2; }

/* top bar */
.page { flex: 1; min-width: 0; display: flex; flex-direction: column; }
.topbar {
  flex: none; height: 74px; display: flex; align-items: center; padding: 0 19px 10px 38px;
  background: #42a5f5; color: #fff;
}
.burger { width: 17px; height: 14px; border: solid #fff; border-width: 2px 0; background: linear-gradient(#fff, #fff) center / 100% 2px no-repeat; }
.greeting { margin-left: 40px; }
.toplinks { margin-left: auto; display: flex; gap: 34px; }
.toplinks a { display: flex; align-items: center; gap: 9px; color: #fff; }
.toplinks svg { width: 26px; height: 26px; margin-bottom: 3px; fill: none; stroke: #fff; stroke-width: 1.500; }

/* toolbar */
.toolbar {
  flex: none; height: 74px; display: flex; align-items: center; padding: 0 6px 0 35px;
  background: #fff; box-shadow: 0 4px 24px rgba(40, 60, 70, .18); position: relative; z-index: 1;
}
.toolbar h1 { margin: 0; font-size: 22px; }
.week { margin-left: 20px; width: 234px; }
.arrow svg { display: block; width: 14px; height: 19px; fill: none; stroke: #555; stroke-width: 2; }
.arrow.next { margin-left: 39px; }
.box { border: 1px solid #dadada; border-radius: 4px; height: 48px; margin-left: 22px; }
.today { width: 96px; margin-left: 39px; }
.pick { width: 47px; height: 50px; }
.pick svg { width: 20px; height: 22px; vertical-align: middle; }
.refresh { width: 60px; }
.refresh svg { width: 20px; height: 19px; vertical-align: middle; }
.toggles { display: flex; gap: 16px; margin-left: auto; }
.toggles label { display: flex; align-items: center; gap: 10px; }
.toggles input {
  appearance: none; width: 30px; height: 30px; margin: 0;
  background: #3498db url("data:image/svg+xml,%3Csvg xmlns='http://www.w3.org/2000/svg' viewBox='0 0 30 30'%3E%3Cpath d='m8 15 4 5 9-10' fill='none' stroke='white' stroke-width='3'/%3E%3C/svg%3E") center / 30px;
}
.add { display: flex; align-items: center; gap: 9px; margin-left: 744px; font-size: 21px; }
.add svg { width: 22px; height: 22px; fill: none; stroke: currentColor; stroke-width: 2; }

/* schedule grid */
.schedule { flex: 1 1 0; min-height: 0; overflow: hidden; }
table { width: calc(100% + 10px); table-layout: fixed; border-spacing: 0; }
th { height: 105px; padding: 13px 0 0; border-bottom: 3px solid #d9d9d9; font-weight: 400; line-height: 28px; vertical-align: top; }
th b { display: block; width: 79px; height: 47px; margin: 0 auto; border-radius: 6px; font-weight: 400; font-size: 33px; line-height: 47px; }
.today-mark { background: #42a5f5; color: #fff; }
.filter { padding: 36px 0 0 61px; text-align: left; border-right: 2px solid #d9d9d9; }
.filter button { display: flex; align-items: center; gap: 18px; }
.filter svg { width: 20px; height: 17px; fill: #555; }
td, tbody th { height: 166px; padding: 24px 13px 0 15px; border-right: 2px solid #dcdcdc; border-bottom: 2px solid #dcdcdc; vertical-align: top; }
tr:nth-child(even) > * { height: 167px; }
tbody th { padding-top: 0; text-align: left; vertical-align: middle; font-weight: 600; }
td.off { background: #f1f1f1; font-size: 16px; font-weight: 600; }
.more { display: block; width: 18px; height: 12px; margin-left: auto; }
.more svg { display: block; width: 18px; height: 6px; fill: #555; }
td .more { margin-bottom: 12px; }
td.off .more { margin-bottom: 8px; }
.count { display: flex; align-items: center; gap: 8px; height: 21px; margin-bottom: 18px; font-size: 16px; font-weight: 600; }
.swatch { width: 21px; height: 21px; border: 3px solid; }
.pair { display: flex; justify-content: space-between; font-size: 15px; line-height: 20px; }
.late { color: #e53935; font-weight: 700; }
.bar { height: 8px; margin: 7px 0 8px; border-radius: 4px; background: #dedede; }

/* unscheduled list */
.lower { flex: 1 1 0; min-height: 0; display: flex; }
.unscheduled { flex: none; width: calc(50% + 4px); display: flex; flex-direction: column; position: relative; background: #f1f1f1; overflow: hidden; }
.filters { flex: none; height: 78px; display: flex; align-items: center; padding: 0 14px; background: #2084c7; color: #fff; }
.filters > span { width: 119px; }
.select { position: relative; width: 281px; height: 50px; margin-left: 20px; }
.select.wide { width: 382px; }
.select select {
  appearance: none; width: 100%; height: 100%; padding: 0 14px; border: 0; border-radius: 4px;
  background: #fff; color: #555; font: inherit;
}
.select.wide select { padding-left: 57px; }
.select::after { content: ""; position: absolute; right: 18px; top: 22px; border: solid transparent; border-width: 6px 6px 0; border-top-color: #666; }
.wave { position: absolute; left: 15px; top: 16px; width: 23px; height: 18px; color: #555; stroke-width: 2; }
.jobs { flex: 1; min-height: 0; display: flex; flex-direction: column; gap: 14px; padding: 14px; overflow: hidden; }
.job {
  flex: none; display: grid; grid-template-columns: 62px 337px 499px 85px 1fr 18px; height: 75px;
  background: #fff; box-shadow: 0 3px 6px rgba(0, 0, 0, .3); font-size: 15px; line-height: 22px;
}
.job > div { padding-top: 16px; }
.job > div:nth-child(2) { padding-left: 14px; }
.job a { display: block; height: 22px; font-size: 17px; }
.job .under { padding-top: 38px; }
.job b { font-weight: 600; }
.job .more { margin: 13px 8px 0 0; justify-self: end; grid-column: 6; }
.job:first-child div:nth-child(2) a { text-decoration: underline; }
.handle { background: #d02f2f; color: #fff; }
.job .handle { display: flex; align-items: flex-start; padding: 9px 8px; }
.handle svg:first-child { width: 8px; height: 16px; fill: #fff; }
.handle svg:last-child { width: 31px; height: 25px; margin-top: 16px; stroke-width: 4; }
.thumb { position: absolute; right: 4px; top: 78px; width: 7px; height: 293px; border-radius: 4px; background: #a6a6a6; }
.popup {
  position: absolute; left: 90px; top: 132px; width: 694px; height: 198px; padding: 13px 15px 0 14px;
  background: #fff; border: 1px solid #dcdcdc; box-shadow: 0 1px 5px rgba(0, 0, 0, .25); font-size: 18px;
}
.popup p { margin: 0 0 14px; }
.popup .split { display: grid; grid-template-columns: 332px 1fr; margin-bottom: 34px; }
.popup .actions { display: flex; justify-content: flex-end; gap: 30px; }
.popup .x { position: absolute; right: 16px; top: 16px; width: 12px; height: 12px; }
.x svg { display: block; stroke: #777; stroke-width: 1; }

/* map */
.map { flex: 1; position: relative; overflow: hidden; font-family: Roboto, sans-serif; color: #111; }
.tiles { display: block; width: 100%; height: 100%; }
#roads path, #hwy path { vector-effect: non-scaling-stroke; }
.road-edge, .road, .hwy-edge, .hwy { fill: none; stroke-linejoin: round; }
.road-edge { stroke: #eab949; stroke-width: 4; }
.road { stroke: #fdeeb4; stroke-width: 2; }
.hwy-edge { stroke: #f0b93f; stroke-width: 6; }
.hwy { stroke: #ffeaa6; stroke-width: 4; }
.borders { fill: none; stroke: #6a6f70; stroke-width: 1; stroke-dasharray: 4 3; }
.national { stroke-width: 2; stroke-dasharray: none; }
.dots { fill: #fff; stroke: #333; stroke-width: 2; }
.signs text { font-size: 13px; font-weight: 700; fill: #fff; text-anchor: middle; }
.signs text.dark { fill: #222; font-weight: 500; }
.labels { font-size: 17px; fill: #222; stroke: #fff; stroke-width: 4; stroke-linejoin: round; paint-order: stroke; }
.labels .mid { font-size: 18px; font-weight: 500; }
.labels .large { font-size: 22px; font-weight: 500; }
.labels .park { font-size: 19px; fill: #2b7d44; }
.labels .it { font-style: italic; }
.labels .state { font-size: 22px; font-weight: 500; fill: #555e60; letter-spacing: 2px; }
.clusters text { font-size: 15px; font-weight: 700; fill: #4a3a2a; text-anchor: middle; }
.clusters .w { fill: #fff; }
.maptype { position: absolute; left: 14px; top: 14px; width: 96px; height: 51px; padding-left: 20px; text-align: left; background: #fff; border-radius: 3px; box-shadow: 0 1px 5px rgba(0, 0, 0, .3); font-weight: 500; font-size: 25px; color: #000; }
.maptype::after { content: ""; position: absolute; right: 11px; top: 23px; border: solid transparent; border-width: 5px 5px 0; border-top-color: #777; }
.ctl, .zoom { position: absolute; right: 6px; width: 55px; height: 56px; background: #fff; border-radius: 3px; box-shadow: 0 1px 5px rgba(0, 0, 0, .3); }
.ctl svg, .zoom svg { display: block; margin: auto; width: 26px; height: 26px; fill: none; stroke: #666; stroke-width: 3; }
.full { top: 14px; }
.peg { bottom: 189px; }
.peg svg { width: 28px; height: 42px; stroke-width: 1; }
.zoom { bottom: 32px; height: 112px; display: grid; }
.zoom button + button { border-top: 1px solid #ddd; margin: 0 7px; }
.zoom svg { stroke-width: 5; }
.google { position: absolute; left: 14px; bottom: 2px; font: 500 29px/38px Lato, sans-serif; text-shadow: 0 0 2px #fff, 0 0 2px #fff, 0 0 3px #fff; color: #4285f4; }
.google i { font-style: normal; }
.google i:nth-child(2), .google i:nth-child(6) { color: #ea4335; }
.google i:nth-child(3) { color: #f4b400; }
.google i:nth-child(5) { color: #34a853; }
.credits { position: absolute; right: 0; bottom: 0; display: flex; gap: 2px; font-size: 14px; line-height: 18px; }
.credits > * { padding: 0 7px; background: rgba(235, 238, 245, .8); color: #000; white-space: nowrap; }
.credits > :last-child { padding-right: 0; }

footer { flex: none; height: 47px; padding: 8px 20px 0 28px; display: flex; align-items: center; justify-content: space-between; border-top: 1px solid #e7e7e7; background: #fff; }
footer b { font-weight: 700; }

/* annotations */
.callout, .hand { position: absolute; pointer-events: none; z-index: 5; }
.callout { fill: #ff2a00; filter: drop-shadow(1px 2px 2px rgba(0, 0, 0, .4)); }
.first { left: 605px; top: 725px; width: 310px; height: 350px; }
.second { left: 980px; top: 1260px; width: 300px; height: 250px; }
.hand { left: 560px; top: 1073px; width: 24px; height: 26px; }
```
FILE: script.js
```js
const techs = [
  { name: "Adam Waltz (Fort Worth)", fill: "#1e88e5", edges: ["#0d47a1", "#e79b3b", "#6fbf2e", "#4db6ac", "#d4e157"], max: [8, 10, 10, 10, 10], miles: [58, 98, 60, 92, 71], time: ["3hr 56m", "4hr 33m", "4hr 1m", "4hr 33m", "4hr 43m"] },
  { name: "Allie Williams", fill: "#ff00ff", edges: ["#1e88e5", "#e79b3b", "#6fbf2e", "#8e24aa", "#dfe04a"], max: [10, 10, 10, 10, 10], miles: [112, 69, 95, 72, 48], time: ["5hr 11m", "4hr 22m", "4hr 52m", "4hr 32m", "4hr 2m"] },
  { name: "Andy Wilcox", fill: "#00796b", edges: ["#1e88e5", "#e79b3b", "#6fbf2e", "#8e24aa", "#dfe04a"], max: [12, 10, 10, 10, 10], miles: [637, 76, 62, 108, 86], time: ["15hr 12m", "4hr 36m", "4hr 26m", "5hr 8m", "5hr 3m"] },
  { name: "Caleb Van Morrison", fill: "#4db6ac", edges: ["#1e88e5", "#e79b3b", "#6fbf2e", "#8e24aa", "#dfe04a"], max: [10, 10, 10, 10, 10], miles: [82, 64, 56, 83, 74], time: ["4hr 39m", "4hr 12m", "4hr 14m", "4hr 38m", "4hr 33m"] }
];
const more = '<button class="more" aria-label="More"><svg><use href="#i-dots"/></svg></button>';
const off = label => `<td class="off">${more}${label}</td>`;

const day = (t, i) => `<td>${more}
  <div class="count"><span class="swatch" style="background:${t.fill};border-color:${t.edges[i]}"></span>0 / ${t.max[i]}</div>
  <div class="pair"><span>0mi</span><span>-${t.miles[i]}mi</span></div>
  <div class="bar"></div>
  <div class="pair"><span>0</span><span class="${t.time[i].startsWith("15") ? "late" : ""}">${t.time[i]}</span></div></td>`;

document.getElementById("techs").innerHTML = techs.map(t =>
  `<tr><th scope="row"><a href="#">${t.name}</a></th>${off("0 pools")}${[0, 1, 2, 3, 4].map(i => day(t, i)).join("")}${off("0 pools")}</tr>`
).join("") + `<tr><th></th>${off("")}${`<td>${more}</td>`.repeat(5)}${off("")}</tr>`;

const plan = "Per Month With Chemicals";
const price = "$225.00 / mo, est. 15m";
const jobs = [
  [plan, "", "Amanda Weber", "", "78254"],
  ["", "", "", "", "78245"],
  ["", "", "", "", "78252"],
  [plan, price, "Carter Anthony", "9636 Salers Springs", "78254"],
  [plan, price, "Chana Lopez", "3115 MARIBELLE", "78228"],
  [plan, price, "Crew Winters", "9566 Bicknell Sedge", "78254"],
  [plan, price, "Denisse Banks", "805 E Crockett ST", "78202"],
  [plan, price, "Francis Blake", "9620 Salers Springs", "78254"]
];
document.getElementById("jobs").innerHTML = jobs.map(([service, cost, who, street, zip]) =>
  `<article class="job">
    <div class="handle"><svg><use href="#i-grip"/></svg><svg><use href="#i-waves"/></svg></div>
    <div><a href="#">${service}</a>${cost}</div>
    <div><a href="#">${who}</a>${street}</div>
    <div class="under">${zip}</div>
    <div class="under"><b>Added: 2/21/25</b></div>
    ${more}
  </article>`).join("");
```
